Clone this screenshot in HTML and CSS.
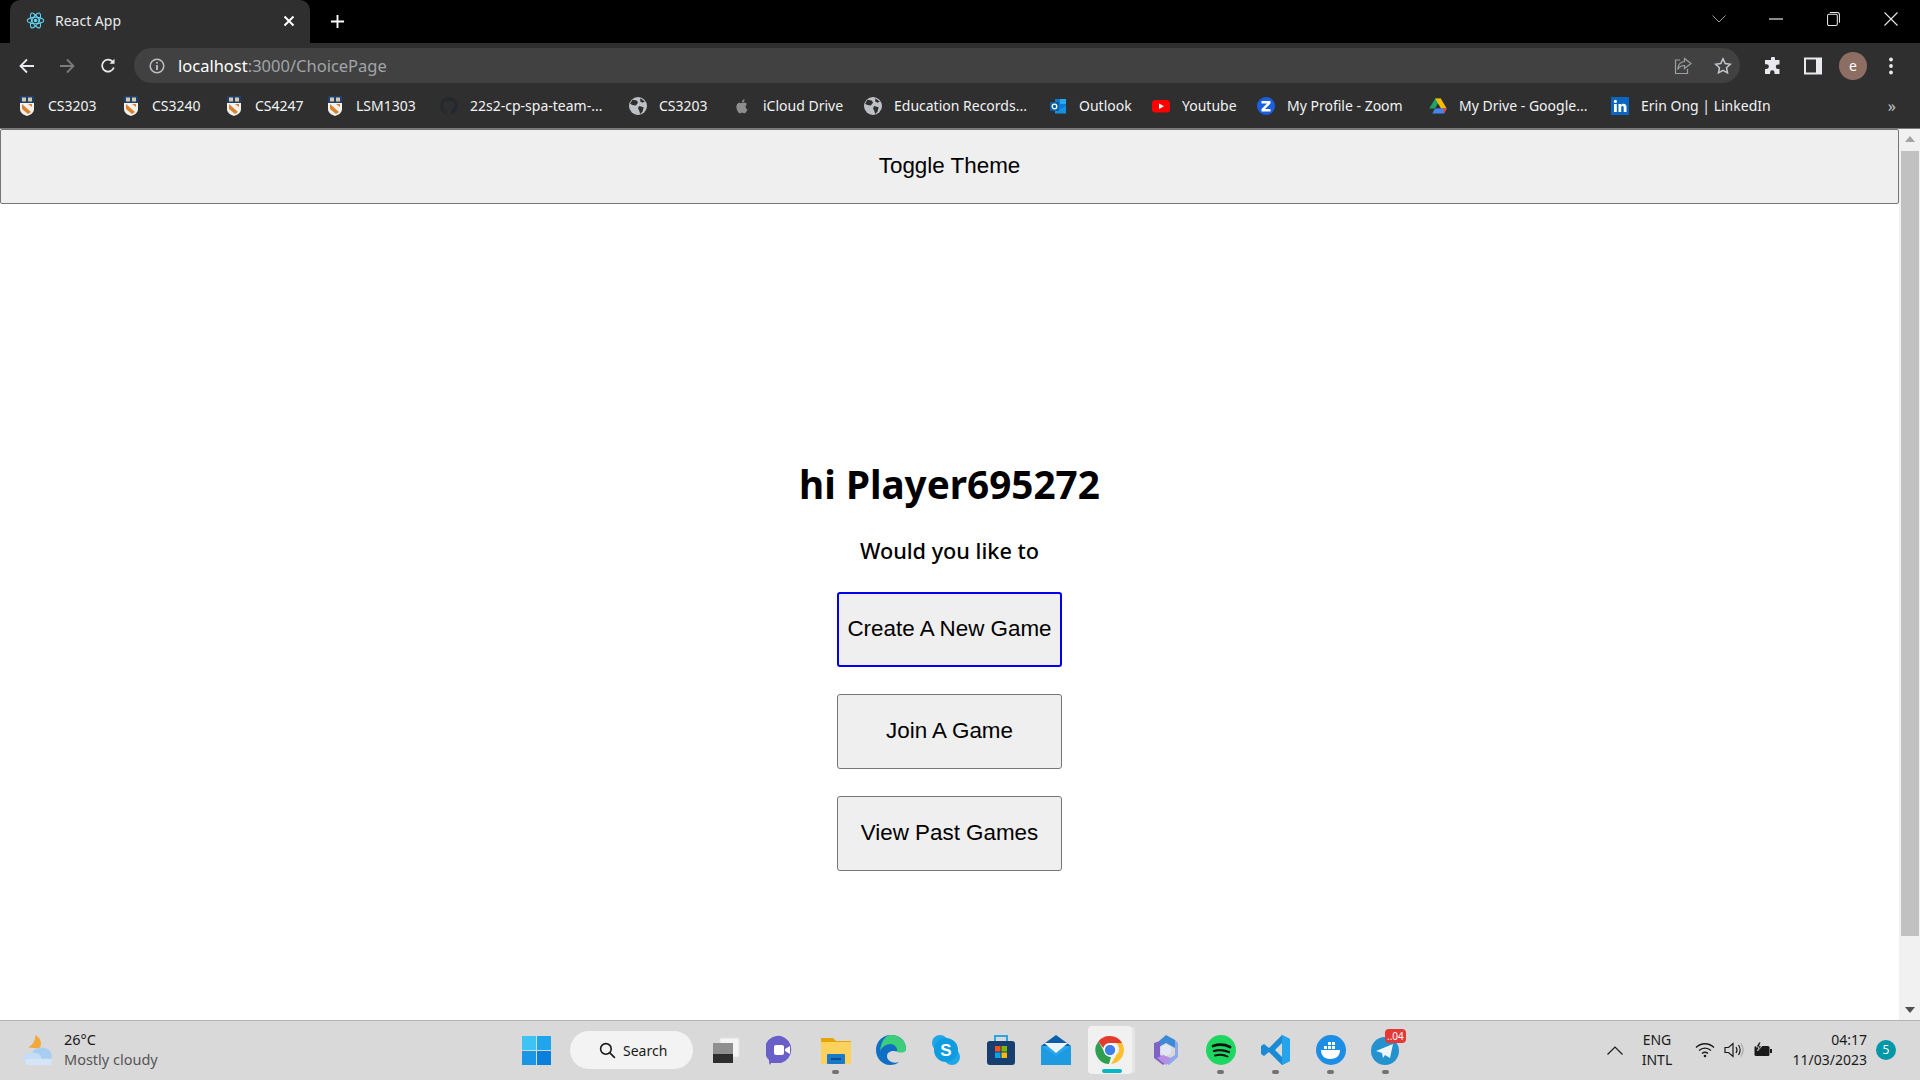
FILE: index.html
```html
<!DOCTYPE html>
<html lang="en">
<head>
    <meta charset="UTF-8">
    <meta name="viewport" content="width=device-width, initial-scale=1.0">
    <title>React App</title>
    <link rel="stylesheet" href="styles.css">
</head>
<body>
    <svg class="defs" width="0" height="0">
        <symbol id="crest" viewBox="0 0 16 20">
            <rect x="1" y="0" width="14" height="7" fill="#1d3f73"/>
            <rect x="3" y="1.5" width="4" height="4" fill="#d8c9a0"/>
            <rect x="9" y="1.5" width="4" height="4" fill="#d8c9a0"/>
            <path d="M1 7h14v6c0 4-4 6-7 7-3-1-7-3-7-7z" fill="#f1f1ee"/>
            <path d="M3 8l9 8-3 2-6-5zM9 8h4v3z" fill="#d9822b"/>
        </symbol>
        <symbol id="globe" viewBox="0 0 16 16">
            <circle cx="8" cy="8" r="8" fill="#bdc1c6"/>
            <path d="M3 2.500l4 .5 1 2-2 2.500-3-.5-2-1zM9 8l4 1-1 4-2 2-1-3-1-2zM10 1l4 3-2 1-2-1z" fill="#2f2f2f"/>
        </symbol>
    </svg>

    <header class="chrome">
        <div class="tabstrip">
            <div class="tab">
                <svg class="favicon" viewBox="-12 -12 24 24" fill="none" stroke="#61dafb" stroke-width="1.300">
                    <circle r="2.200" fill="#61dafb" stroke="none"/>
                    <ellipse rx="10.500" ry="4.200"/>
                    <ellipse rx="10.500" ry="4.200" transform="rotate(60)"/>
                    <ellipse rx="10.500" ry="4.200" transform="rotate(120)"/>
                </svg>
                <span class="tab-title">React App</span>
                <svg class="tab-close" viewBox="0 0 12 12" stroke="#fff" stroke-width="2"><path d="M1.500 1.500l9 9M10.500 1.500l-9 9"/></svg>
            </div>
            <svg class="new-tab" viewBox="0 0 16 16" stroke="#fff" stroke-width="2"><path d="M8 1v14M1 8h14"/></svg>
            <div class="window-btns">
                <svg class="win-chevron" viewBox="0 0 14 8" fill="none" stroke="#9a9a9a"><path d="M.5 .5L7 7l6.500-6.500"/></svg>
                <svg class="win-min" viewBox="0 0 14 2" stroke="#e8e8e8" stroke-width="1.200"><path d="M0 1h14"/></svg>
                <svg class="win-restore" viewBox="0 0 14 16" fill="none" stroke="#e8e8e8" stroke-width="1.100"><rect x=".6" y="3" width="10.500" height="12" rx="1.500"/><path d="M3 1h8c1.500 0 2.400 1 2.400 2.400v8.600"/></svg>
                <svg class="win-close" viewBox="0 0 14 14" stroke="#e8e8e8" stroke-width="1.100"><path d="M.5 .5l13 13M13.500 .5l-13 13"/></svg>
            </div>
        </div>

        <div class="toolbar">
            <svg class="nav-icon" viewBox="0 0 16 16" fill="none" stroke="#e8eaed" stroke-width="1.800"><path d="M15 8H2M8 1.500L1.500 8 8 14.500"/></svg>
            <svg class="nav-icon dim" viewBox="0 0 16 16" fill="none" stroke="#7b7b7b" stroke-width="1.800"><path d="M1 8h13M8 1.500L14.500 8 8 14.500"/></svg>
            <svg class="nav-icon" viewBox="0 0 16 16" fill="none" stroke="#e8eaed" stroke-width="1.800"><path d="M13.800 9.500A6 6 0 1 1 12.500 3.500"/><path d="M14.500 .8v5h-5z" fill="#e8eaed" stroke="none"/></svg>
            <div class="omnibox">
                <svg class="info-icon" viewBox="0 0 16 16" fill="none" stroke="#bdc1c6" stroke-width="1.500"><circle cx="8" cy="8" r="6.800"/><path d="M8 7v5M8 4v1.500" stroke-width="1.800"/></svg>
                <span class="url"><span class="url-host">localhost</span>:3000/ChoicePage</span>
                <svg class="omni-icon share" viewBox="0 0 18 18" fill="none" stroke="#9aa0a6" stroke-width="1.200"><path d="M6 3H1.500v13.500h12V12"/><path d="M10.500 1.500L17 6.500l-6.500 5V8.500C7 8.500 5 10 3.800 12.500 4 8 6.500 4.800 10.500 4.500z"/></svg>
                <svg class="omni-icon star" viewBox="0 0 18 18" fill="none" stroke="#c4c7cb" stroke-width="1.500"><path d="M9 1.800l2.200 4.800 5.100.6-3.800 3.500 1 5.100L9 13.300l-4.500 2.500 1-5.100L1.700 7.200l5.100-.6z"/></svg>
            </div>
            <svg class="tool-icon puzzle" viewBox="0 0 18 18" fill="#e8eaed"><path d="M7 1.500a2 2 0 0 1 4 0V3h4.500v4.500H14a2.200 2.200 0 0 0 0 4.400h1.500V17H10.500v-1.500a2.200 2.200 0 0 0-4.400 0V17H1v-5h1.500a2.400 2.400 0 0 0 0-4.800H1V3h6z"/></svg>
            <svg class="tool-icon panel" viewBox="0 0 18 18" fill="none" stroke="#e8eaed" stroke-width="2"><rect x="1" y="1.500" width="16" height="15"/><rect x="12" y="2" width="4.500" height="14" fill="#e8eaed" stroke="none"/></svg>
            <div class="avatar">e</div>
            <svg class="tool-dots" viewBox="0 0 4 18" fill="#e8eaed"><circle cx="2" cy="2.500" r="1.900"/><circle cx="2" cy="9" r="1.900"/><circle cx="2" cy="15.500" r="1.900"/></svg>
        </div>

        <nav class="bookmarks">
            <a class="bm"><svg class="bm-icon crest"><use href="#crest"/></svg>CS3203</a>
            <a class="bm"><svg class="bm-icon crest"><use href="#crest"/></svg>CS3240</a>
            <a class="bm"><svg class="bm-icon crest"><use href="#crest"/></svg>CS4247</a>
            <a class="bm"><svg class="bm-icon crest"><use href="#crest"/></svg>LSM1303</a>
            <a class="bm"><svg class="bm-icon" viewBox="0 0 16 16"><path fill="#24292f" d="M8 0a8 8 0 0 0-2.500 15.600c.4.100.5-.2.500-.4v-1.400c-2.200.5-2.700-1-2.700-1-.4-.9-.9-1.200-.9-1.200-.7-.5.100-.5.100-.5.800.1 1.200.8 1.200.8.700 1.200 1.900.9 2.300.7.100-.5.300-.9.500-1.100-1.800-.2-3.700-.9-3.700-4 0-.9.300-1.600.8-2.100-.1-.2-.4-1 .1-2.100 0 0 .7-.2 2.200.8a7.500 7.500 0 0 1 4 0c1.500-1 2.200-.8 2.200-.8.400 1.100.2 1.900.1 2.100.5.600.8 1.300.8 2.100 0 3.100-1.900 3.700-3.700 3.900.3.300.6.800.6 1.500v2.200c0 .2.100.5.600.4A8 8 0 0 0 8 0z"/></svg>22s2-cp-spa-team-...</a>
            <a class="bm"><svg class="bm-icon"><use href="#globe"/></svg>CS3203</a>
            <a class="bm"><svg class="bm-icon" viewBox="0 0 16 16"><path fill="#8e8e8e" d="M11.200 8.500c0-1.500 1.200-2.200 1.300-2.300-.7-1-1.800-1.200-2.200-1.200-.9-.1-1.800.6-2.300.6s-1.200-.5-2-.5c-1 0-2 .6-2.500 1.500-1.100 1.900-.3 4.600.8 6.200.5.800 1.100 1.600 1.900 1.600s1-.5 2-.5 1.200.5 2 .5 1.300-.8 1.800-1.500c.6-.9.800-1.700.8-1.800 0 0-1.600-.6-1.600-2.600zM9.700 3.900c.4-.5.700-1.200.6-1.900-.6 0-1.300.4-1.800.9-.4.400-.7 1.100-.6 1.800.7.100 1.400-.3 1.800-.8z"/></svg>iCloud Drive</a>
            <a class="bm"><svg class="bm-icon"><use href="#globe"/></svg>Education Records...</a>
            <a class="bm"><svg class="bm-icon" viewBox="0 0 18 18"><rect x="6" y="2" width="11" height="14" fill="#0f78d4"/><rect x="11" y="2" width="6" height="5" fill="#28a8ea"/><path d="M6 9l5.500 3L17 9v7.500H6z" fill="#1490df"/><rect x="1" y="5" width="9" height="9" fill="#0a5ea8"/><circle cx="5.500" cy="9.500" r="2.300" fill="none" stroke="#fff" stroke-width="1.300"/></svg>Outlook</a>
            <a class="bm"><svg class="bm-icon" viewBox="0 0 18 18"><rect x="0" y="3" width="18" height="12.500" rx="3.500" fill="#f00"/><path d="M7 6.500l5 2.700-5 2.700z" fill="#fff"/></svg>Youtube</a>
            <a class="bm"><svg class="bm-icon" viewBox="0 0 18 18"><circle cx="9" cy="9" r="9" fill="#1a5fe0"/><path d="M4.500 4h9v2.500L8 12h5.500v2.500h-9V12L10 6.500H4.500z" fill="#fff"/></svg>My Profile - Zoom</a>
            <a class="bm"><svg class="bm-icon" viewBox="0 0 18 18"><path d="M6.200 1.500h5.600L6 11.500H.3z" fill="#1ea362"/><path d="M11.800 1.500l5.900 10H12l-5.800-10z" fill="#ffba00"/><path d="M3.200 16.500L6 11.500h11.700L15 16.500z" fill="#4285f4"/><path d="M15 16.500l2.700-5H14z" fill="#ea4335"/></svg>My Drive - Google...</a>
            <a class="bm"><svg class="bm-icon" viewBox="0 0 18 18"><rect width="18" height="18" fill="#0a66c2"/><rect x="3" y="7" width="2.800" height="8" fill="#fff"/><circle cx="4.400" cy="4.400" r="1.600" fill="#fff"/><path d="M7.500 7h2.600v1.200c.5-.8 1.400-1.400 2.500-1.400 2 0 2.900 1.300 2.900 3.400V15h-2.800v-4.200c0-1-.3-1.700-1.200-1.700s-1.300.7-1.300 1.700V15H7.500z" fill="#fff"/></svg>Erin Ong | LinkedIn</a>
            <span class="bm-more">»</span>
        </nav>
    </header>

    <div class="viewport">
        <main class="page">
            <button class="btn toggle-btn">Toggle Theme</button>
            <section class="choice">
                <h1 class="greeting">hi Player695272</h1>
                <h3 class="prompt">Would you like to</h3>
                <button class="btn choice-btn focused">Create A New Game</button>
                <button class="btn choice-btn">Join A Game</button>
                <button class="btn choice-btn">View Past Games</button>
            </section>
        </main>
        <div class="scrollbar">
            <span class="arrow up"></span>
            <div class="thumb"></div>
            <span class="arrow down"></span>
        </div>
    </div>

    <footer class="taskbar">
        <div class="weather">
            <svg class="weather-icon" viewBox="0 0 32 32">
                <path d="M13 1c5 3 7 8 4 13l-11-1c4-2 7-6 7-12z" fill="#f2a93b"/>
                <ellipse cx="19" cy="21" rx="10" ry="8" fill="#a9cdf0"/>
                <ellipse cx="10" cy="24" rx="9" ry="6" fill="#c4dcf5"/>
                <rect x="3" y="24" width="26" height="6" rx="3" fill="#d4e5f7"/>
            </svg>
            <div class="weather-text">
                <div>26°C</div>
                <div class="muted">Mostly cloudy</div>
            </div>
        </div>

        <div class="tb-cell start">
            <svg class="start-icon" viewBox="0 0 29 29">
                <rect width="14" height="14" fill="#3ec3f5"/><rect x="15" width="14" height="14" fill="#20a4ec"/>
                <rect y="15" width="14" height="14" fill="#1a96e6"/><rect x="15" y="15" width="14" height="14" fill="#0a7fdc"/>
            </svg>
        </div>
        <div class="search-pill">
            <svg class="search-icon" viewBox="0 0 16 16" fill="none" stroke="#1a1a1a" stroke-width="1.500"><circle cx="6.500" cy="6.500" r="5"/><path d="M10.200 10.200L15 15"/></svg>
            Search
        </div>

        <div class="tb-cell">
            <svg class="tb-icon" viewBox="0 0 30 30"><rect x="9" y="3" width="19" height="19" fill="#f4f4f4" stroke="#e2e2e2"/><rect x="2" y="8" width="20" height="20" fill="#2e2e2e"/><rect x="2" y="8" width="20" height="11" fill="#8f8f8f"/></svg>
        </div>
        <div class="tb-cell">
            <svg class="tb-icon" viewBox="0 0 30 30"><path d="M15 1a14 14 0 0 1 0 27H5l-1 2c-1-1-1-3-1-5A14 14 0 0 1 15 1z" fill="#6a5fc8"/><rect x="8" y="10" width="10" height="10" rx="2" fill="#fff"/><path d="M19 14l5-3v8l-5-3z" fill="#fff"/></svg>
        </div>
        <div class="tb-cell running">
            <svg class="tb-icon" viewBox="0 0 30 30"><path d="M0 3h12l3 3h15v23H0z" fill="#e5a50a"/><rect x="0" y="7" width="30" height="22" fill="#fcd25c"/><rect x="6" y="19" width="18" height="10" rx="1" fill="#1a78c8"/><rect x="10" y="23" width="10" height="2" fill="#0b4f8c"/></svg>
        </div>
        <div class="tb-cell">
            <svg class="tb-icon" viewBox="0 0 30 30"><path d="M15 0C6 0 0 7 0 15c0 8 6 15 14 15 4 0 7-1 9-3-6 2-12-1-12-6 0-3 2-4 5-5 3 0 14 2 14-2C30 6 24 0 15 0z" fill="#0f6fc4"/><path d="M15 0c8 0 15 6 15 14 0 4-5 4-9 3 1-3-1-7-6-8-5 0-9 3-11 7C5 7 9 0 15 0z" fill="#3ccf7a"/></svg>
        </div>
        <div class="tb-cell">
            <svg class="tb-icon" viewBox="0 0 30 30"><circle cx="9" cy="8" r="8" fill="#1ea7e8"/><circle cx="21" cy="22" r="8" fill="#1ea7e8"/><circle cx="15" cy="15" r="12" fill="#0f9be0"/><text class="skype-s" x="15" y="21" text-anchor="middle">S</text></svg>
        </div>
        <div class="tb-cell">
            <svg class="tb-icon" viewBox="0 0 30 30"><path d="M9 6V1h12v5" fill="none" stroke="#2aa6e0" stroke-width="2"/><rect x="1" y="6" width="28" height="24" rx="3" fill="#173e6e"/><rect x="9" y="11" width="5.500" height="5.500" fill="#f25022"/><rect x="15.500" y="11" width="5.500" height="5.500" fill="#7fba00"/><rect x="9" y="17.500" width="5.500" height="5.500" fill="#00a4ef"/><rect x="15.500" y="17.500" width="5.500" height="5.500" fill="#ffb900"/></svg>
        </div>
        <div class="tb-cell">
            <svg class="tb-icon" viewBox="0 0 30 30"><path d="M15 0L0 11h30z" fill="#0b5ea8"/><rect x="0" y="11" width="30" height="19" fill="#28a8ea"/><path d="M3 8h24l-12 10z" fill="#f1f4f7"/><path d="M0 11l15 10 15-10v19H0z" fill="#1e9ae0"/></svg>
        </div>
        <div class="tb-cell active">
            <svg class="tb-icon" viewBox="0 0 30 30"><path d="M15 1a14 14 0 0 1 12.100 7H15a7 7 0 0 0-6.700 5L3.300 6.500A14 14 0 0 1 15 1z" fill="#e33b2e"/><path d="M27.100 8A14 14 0 0 1 16 29l6-10a7 7 0 0 0-1-11z" fill="#fbc02d"/><path d="M3.300 6.500L9 16a7 7 0 0 0 7 6l-2 7A14 14 0 0 1 3.300 6.500z" fill="#2e9e4f"/><circle cx="15" cy="15" r="6.500" fill="#fff"/><circle cx="15" cy="15" r="5.200" fill="#3f7fe8"/></svg>
        </div>
        <div class="tb-cell">
            <svg class="tb-icon" viewBox="0 0 30 30"><path d="M15 0l9 5v8l-9-5-7 4V6z" fill="#3d8ad6"/><path d="M3 8l6-2v14l8 6-5 4-9-7z" fill="#7f62c8"/><path d="M24 5l3 3v14l-9 8-5-3 11-7z" fill="#8fa8ec"/><path d="M6 23l6-3 8 3-5 7z" fill="#b78fe2"/><path d="M10 12l5-3 5 3v6l-5 3-5-3z" fill="#e3e6f5"/></svg>
        </div>
        <div class="tb-cell running">
            <svg class="tb-icon" viewBox="0 0 30 30" fill="none" stroke="#111" stroke-linecap="round"><circle cx="15" cy="15" r="15" fill="#1ed760" stroke="none"/><path d="M7 11c6-2 12-1.500 17 1" stroke-width="2.800"/><path d="M8 16c5-1.500 10-1 15 1" stroke-width="2.300"/><path d="M9 20.500c4-1 9-.8 12.500 1" stroke-width="1.900"/></svg>
        </div>
        <div class="tb-cell running">
            <svg class="tb-icon" viewBox="0 0 30 30"><path d="M21 0l8 4v22l-8 4L8 17l-5 4-3-2v-8l3-2 5 4z" fill="#1a8ad4"/><path d="M21 0l8 4v22l-8 4z" fill="#25a4ec"/><path d="M21 8l-7 7 7 7z" fill="#d9d9d9"/></svg>
        </div>
        <div class="tb-cell running">
            <svg class="tb-icon" viewBox="0 0 30 30"><circle cx="15" cy="15" r="15" fill="#1d8ee6"/><path d="M5 15h19c0 5-3 9-10 9-6 0-9-4-9-9z" fill="#fff"/><g fill="#fff"><rect x="8" y="11" width="3" height="3"/><rect x="12" y="11" width="3" height="3"/><rect x="16" y="11" width="3" height="3"/><rect x="12" y="7" width="3" height="3"/><rect x="16" y="7" width="3" height="3"/></g></svg>
        </div>
        <div class="tb-cell running">
            <svg class="tb-icon" viewBox="0 0 30 30"><circle cx="14" cy="16" r="14" fill="#2492cf"/><path d="M5 16l17-7-3 14-5-3-2 3-1-5z" fill="#eef6fb"/></svg>
            <span class="tg-badge">..04</span>
        </div>

        <div class="tray">
            <svg class="tray-chevron" viewBox="0 0 16 9" fill="none" stroke="#1a1a1a" stroke-width="1.200"><path d="M.5 8.500L8 1l7.500 7.500"/></svg>
            <div class="lang">ENG<br>INTL</div>
            <svg class="tray-icon" viewBox="0 0 20 16" fill="none" stroke="#1a1a1a" stroke-width="1.300"><path d="M1 5.500c5-5 13-5 18 0M4 8.500c3.500-3.300 8.500-3.300 12 0M7 11.500c1.800-1.500 4.200-1.500 6 0"/><circle cx="10" cy="14" r="1.300" fill="#1a1a1a" stroke="none"/></svg>
            <svg class="tray-icon" viewBox="0 0 20 16" fill="none" stroke="#1a1a1a" stroke-width="1.200"><path d="M1 5.500h3.500L9 1.500v13l-4.500-4H1z"/><path d="M12 5c1.200 1.800 1.200 4.200 0 6M14.500 3c2 3 2 7 0 10"/><path d="M17 1.500c2.600 4 2.600 9 0 13" stroke="#a8a8a8"/></svg>
            <svg class="tray-icon" viewBox="0 0 20 16"><rect x="1.500" y="4" width="15" height="10" rx="1.500" fill="#1a1a1a"/><rect x="17" y="7" width="2" height="4" fill="#1a1a1a"/><path d="M6 0L3 5h3L4.500 9 9 4H6.500L8 0z" fill="#1a1a1a" stroke="#d9d9d9" stroke-width=".8"/></svg>
            <div class="clock"><div>04:17</div><div>11/03/2023</div></div>
            <div class="notif">5</div>
        </div>
    </footer>
</body>
</html>
```

FILE: styles.css
```css
* { box-sizing: border-box; }
html, body { margin: 0; height: 100%; }
body { display: flex; flex-direction: column; height: 100vh; overflow: hidden; font-family: "Noto Sans", sans-serif; background: #fff; }
.defs { position: absolute; }

/* browser chrome */
.chrome { background: #2f2f2f; color: #e8eaed; border-bottom: 1px solid #7a7a7a; }
.tabstrip { display: flex; align-items: center; height: 43px; background: #000; }
.tab { display: flex; align-items: center; width: 300px; height: 43px; margin-left: 10px; padding: 0 10px 2px 16px; background: #2f2f2f; border-radius: 10px 10px 0 0; }
.favicon { width: 19px; height: 19px; margin-right: 10px; }
.tab-title { flex: 1; font-size: 14px; color: #e8eaed; }
.tab-close { width: 12px; height: 12px; margin-right: 5px; }
.new-tab { width: 15px; height: 15px; margin-left: 20px; }
.window-btns { display: flex; align-items: center; margin-left: auto; margin-bottom: 5px; }
.win-chevron { width: 14px; height: 8px; margin-right: 43px; }
.win-min { width: 14px; height: 2px; margin-right: 44px; }
.win-restore { width: 13px; height: 16px; margin-right: 44px; }
.win-close { width: 14px; height: 14px; margin-right: 22px; }

.toolbar { display: flex; align-items: center; height: 45px; padding: 5px 0 5px 19px; }
.nav-icon { width: 16px; height: 16px; margin-right: 24px; }
.nav-icon:nth-child(3) { margin-left: 1px; }
.omnibox { display: flex; align-items: center; width: 1606px; height: 35px; margin-left: -6px; padding: 0 8px 0 15px; background: #414141; border-radius: 18px; }
.info-icon { width: 16px; height: 16px; margin-right: 13px; }
.url { flex: 1; font-size: 16.500px; color: #a2a5a9; }
.url-host { color: #fff; }
.omni-icon { width: 18px; height: 18px; margin-left: 23px; }
.omni-icon.star { margin-left: 22px; }
.tool-icon { width: 18px; height: 18px; }
.puzzle { margin-left: 24px; }
.panel { margin-left: 22px; }
.avatar { width: 28px; height: 28px; margin-left: 17px; border-radius: 50%; background: #8d6e63; color: #fff; font-size: 14px; line-height: 27px; text-align: center; }
.tool-dots { width: 4px; height: 18px; margin-left: 22px; }

.bookmarks { display: grid; grid-template-columns: 104px 103px 101px 114px 189px 104px 131px 185px 103px 105px 172px 182px 1fr auto; align-items: center; height: 35px; margin-bottom: 5px; padding-left: 18px; font-size: 14px; }
.bm { display: flex; align-items: center; gap: 12px; white-space: nowrap; color: #f1f3f4; }
.bm-icon { width: 18px; height: 18px; }
.crest { height: 20px; }
.bm-more { margin-right: 24px; font-size: 16px; color: #c4c7cb; }

/* page */
.viewport { flex: 1; display: flex; min-height: 0; }
.page { flex: 1; min-width: 0; }
.btn { background: #efefef; border: 1px solid #767676; border-radius: 3px; color: #000; font-family: "Liberation Sans", Arial, sans-serif; font-size: 22.400px; padding: 0 0 2px; }
.toggle-btn { display: block; width: 100%; height: 75px; border-radius: 2px; }
.choice { display: flex; flex-direction: column; align-items: center; }
.greeting { margin: 255px 0 0; font-size: 38.700px; line-height: 50px; font-weight: 700; }
.prompt { margin: 27px 0 0; font-size: 21.700px; line-height: 30px; font-weight: 500; }
.choice-btn { width: 225px; height: 75px; margin-top: 27px; }
.prompt + .choice-btn { margin-top: 26px; }
.focused { border: 2px solid #0000ee; }

.scrollbar { display: flex; flex-direction: column; align-items: center; width: 21px; background: #f1f1f1; }
.arrow { width: 0; height: 0; margin: 7px 0; border-left: 5px solid transparent; border-right: 5px solid transparent; }
.arrow.up { border-bottom: 6px solid #a3a3a3; }
.arrow.down { margin-top: auto; border-top: 6px solid #505050; }
.thumb { width: 18px; height: 785px; margin-top: 2px; background: #c1c1c1; }

/* windows taskbar */
.taskbar { display: flex; align-items: center; height: 60px; padding: 0 0 1px 22px; background: #d9d9d9; border-top: 1px solid #b3b3b3; font-size: 14px; color: #1a1a1a; }
.weather { display: flex; align-items: center; gap: 9px; width: 477px; line-height: 20px; }
.weather-icon { width: 33px; height: 33px; }
.weather-text { margin-bottom: 2px; font-size: 14.500px; }
.muted { color: #555; }
.tb-cell { position: relative; display: flex; align-items: center; justify-content: center; width: 55px; height: 48px; flex: none; }
.start { width: 55px; margin-right: 6px; margin-left: 10px; }
.start-icon { width: 29px; height: 29px; }
.search-pill { display: flex; align-items: center; gap: 7px; width: 123px; height: 38px; margin-right: 5px; padding-left: 29px; border-radius: 19px; background: #f3f3f3; }
.search-icon { width: 17px; height: 17px; }
.tb-icon { width: 30px; height: 30px; }
.skype-s { font-family: "Liberation Sans", sans-serif; font-size: 17px; font-weight: 700; fill: #fff; }
.running::after { content: ""; position: absolute; left: 24px; bottom: 0; width: 7px; height: 4px; border-radius: 2px; background: #737373; }
.active { background: #f1f1f1; border-radius: 4px; width: 44px; margin: 0 6.500px 0 4.500px; box-shadow: 4px 0 0 -1px #e6e6e6; }
.active::after { content: ""; position: absolute; left: 14px; bottom: 1px; width: 20px; height: 4px; border-radius: 2px; background: #00b7c3; }
.tg-badge { position: absolute; left: 27px; top: 3px; padding: 0 2px; border-radius: 4px; background: #e53935; color: #fff; font-size: 10px; line-height: 14px; }

.tray { display: flex; align-items: center; margin-left: auto; }
.tray-chevron { width: 16px; height: 9px; margin-right: 9px; }
.lang { width: 50px; margin-right: 13px; line-height: 20px; text-align: center; }
.tray-icon { width: 20px; height: 16px; margin-right: 9px; }
.clock { width: 85px; margin-right: 9px; line-height: 20px; text-align: right; }
.notif { width: 20px; height: 20px; margin-right: 24px; border-radius: 50%; background: #0097a7; color: #fff; font-size: 12px; line-height: 20px; text-align: center; }
```
